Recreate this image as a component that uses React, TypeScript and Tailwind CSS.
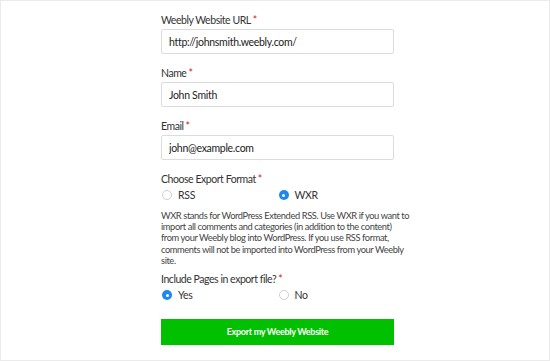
import React, { useState } from 'react';

const FONT = "font-['Lato','Liberation_Sans',sans-serif]";

const Label: React.FC<{ children: React.ReactNode }> = ({ children }) => (
  <div className="text-[10.5px] leading-[14px] tracking-[-0.45px] text-[#333]">
    {children}
    <span className="ml-[2px] text-[#e02020]">*</span>
  </div>
);

const TextField: React.FC<{ label: string; value: string; className?: string }> = ({
  label,
  value,
  className = '',
}) => (
  <div className={className}>
    <Label>{label}</Label>
    <input
      type="text"
      defaultValue={value}
      className="mt-[2px] block h-[25px] w-full rounded-[2px] border border-[#dcdcdc] bg-white px-[7px] text-[10.5px] tracking-[-0.3px] text-[#222] outline-none"
    />
  </div>
);

const Radio: React.FC<{ label: string; checked: boolean; onSelect: () => void }> = ({
  label,
  checked,
  onSelect,
}) => (
  <button type="button" onClick={onSelect} className="flex items-center text-left">
    <span
      className={`ml-[1px] flex h-[10px] w-[10px] items-center justify-center rounded-full ${
        checked ? 'bg-[#1e88f0]' : 'border border-[#cfcfcf] bg-white'
      }`}
    >
      {checked && <span className="h-[3px] w-[3px] rounded-full bg-white" />}
    </span>
    <span className="ml-[6px] text-[10.5px] leading-[14px] tracking-[-0.3px] text-[#333]">
      {label}
    </span>
  </button>
);

export default function App() {
  const [format, setFormat] = useState<'rss' | 'wxr'>('wxr');
  const [pages, setPages] = useState<'yes' | 'no'>('yes');

  return (
    <div className={`h-[361px] w-[550px] border border-[#ebebeb] bg-white ${FONT}`}>
      <div className="ml-[160px] w-[233px] pt-[12px]">
        <TextField label="Weebly Website URL" value="http://johnsmith.weebly.com/" />
        <TextField label="Name" value="John Smith" className="mt-[12px]" />
        <TextField label="Email" value="john@example.com" className="mt-[12px]" />

        <div className="mt-[12px]">
          <Label>Choose Export Format</Label>
          <div className="mt-[2px] grid grid-cols-2">
            <Radio label="RSS" checked={format === 'rss'} onSelect={() => setFormat('rss')} />
            <Radio label="WXR" checked={format === 'wxr'} onSelect={() => setFormat('wxr')} />
          </div>
          <p className="mt-[8px] whitespace-nowrap text-[9.3px] leading-[11.2px] tracking-[-0.4px] text-[#444]">
            WXR stands for WordPress Extended RSS. Use WXR if you want to
            <br />
            import all comments and categories (in addition to the content)
            <br />
            from your Weebly blog into WordPress. If you use RSS format,
            <br />
            comments will not be imported into WordPress from your Weebly
            <br />
            site.
          </p>
        </div>

        <div className="mt-[6px]">
          <Label>Include Pages in export file?</Label>
          <div className="mt-[2px] grid grid-cols-2">
            <Radio label="Yes" checked={pages === 'yes'} onSelect={() => setPages('yes')} />
            <Radio label="No" checked={pages === 'no'} onSelect={() => setPages('no')} />
          </div>
        </div>

        <button
          type="button"
          className="mt-[17px] flex h-[26px] w-full items-center justify-center bg-[#00c000] text-[9px] font-bold tracking-[-0.3px] text-white"
        >
          Export my Weebly Website
        </button>
      </div>
    </div>
  );
}
